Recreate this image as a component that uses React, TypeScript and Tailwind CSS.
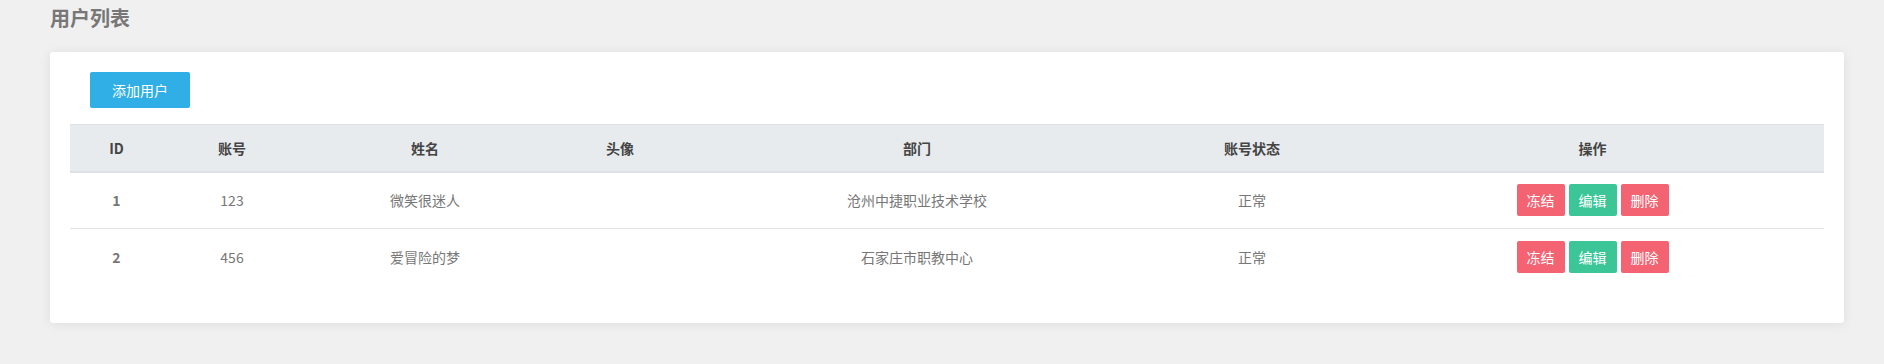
const users = [
  { id: 1, account: '123', name: '微笑很迷人', avatar: '', dept: '沧州中捷职业技术学校', status: '正常' },
  { id: 2, account: '456', name: '爱冒险的梦', avatar: '', dept: '石家庄市职教中心', status: '正常' },
];

const font = { fontFamily: '"Noto Sans CJK SC", "Liberation Sans", sans-serif' };

export default function App() {
  return (
    <div
      className="min-h-[364px] bg-[#f0f0f0] pl-[50px] pr-[40px] pt-[3px] pb-[42px] text-sm"
      style={font}
    >
      <h2 className="text-[20px] leading-[30px] font-bold text-[#777777] mb-[19px]">用户列表</h2>

      <div className="bg-white rounded-[3px] shadow-[0_1px_12px_rgba(0,0,0,0.08)] pl-[20px] pr-[20px] pt-[20px] pb-[37px]">
        <div className="pl-[20px] mb-[16px]">
          <button className="w-[100px] h-[36px] bg-[#30aee6] text-white text-[14px] rounded-[2px]">
            添加用户
          </button>
        </div>

        <table className="w-full border-collapse text-[14px] table-fixed">
          <colgroup>
            <col className="w-[93px]" />
            <col className="w-[138px]" />
            <col className="w-[248px]" />
            <col className="w-[142px]" />
            <col className="w-[452px]" />
            <col className="w-[218px]" />
            <col />
          </colgroup>
          <thead>
            <tr className="bg-[#e8ebee] border-t border-[#dee2e6] border-b-2 border-b-[#dee2e6]">
              <th className="h-[47px] font-bold text-[#444]">ID</th>
              <th className="font-bold text-[#444]">账号</th>
              <th className="font-bold text-[#444]">姓名</th>
              <th className="font-bold text-[#444]">头像</th>
              <th className="font-bold text-[#444]">部门</th>
              <th className="font-bold text-[#444]">账号状态</th>
              <th className="font-bold text-[#444]">操作</th>
            </tr>
          </thead>
          <tbody>
            {users.map((u, i) => (
              <tr
                key={u.id}
                className={i < users.length - 1 ? 'border-b border-[#e3e3e3]' : ''}
              >
                <td className="h-[57px] text-center font-bold text-[#777]">{u.id}</td>
                <td className="text-center text-[#777]">{u.account}</td>
                <td className="text-center text-[#777]">{u.name}</td>
                <td className="text-center text-[#777]">{u.avatar}</td>
                <td className="text-center text-[#777]">{u.dept}</td>
                <td className="text-center text-[#777]">{u.status}</td>
                <td className="text-center">
                  <div className="flex justify-center gap-[4px]">
                    <button className="w-[48px] h-[32px] bg-[#f36372] text-white rounded-[2px]">冻结</button>
                    <button className="w-[48px] h-[32px] bg-[#3cc597] text-white rounded-[2px]">编辑</button>
                    <button className="w-[48px] h-[32px] bg-[#f36372] text-white rounded-[2px]">删除</button>
                  </div>
                </td>
              </tr>
            ))}
          </tbody>
        </table>
      </div>
    </div>
  );
}
